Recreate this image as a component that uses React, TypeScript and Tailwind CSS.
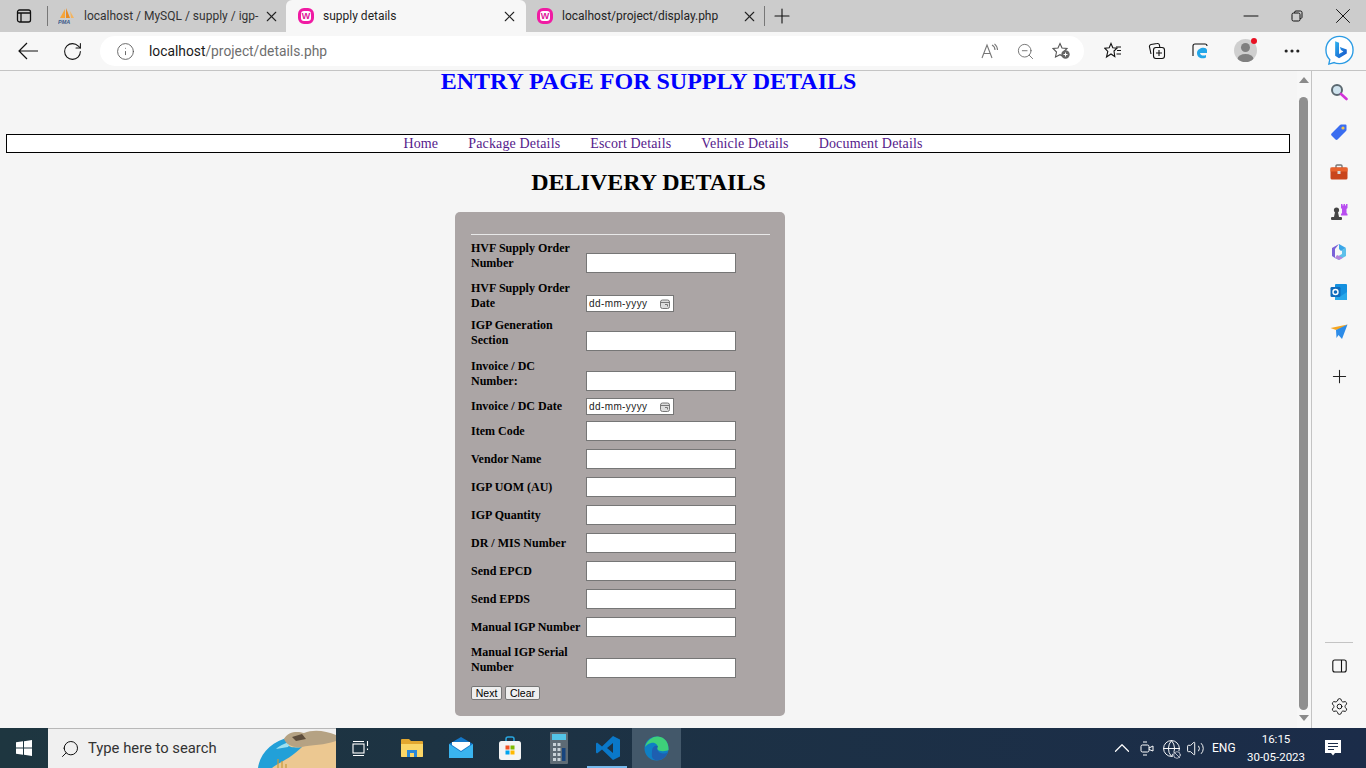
import React from 'react';
import { Ban, ChevronUp, Globe, Info, Minus, MoreHorizontal, Plus, RotateCw, Search, Settings, Volume2, X, ZoomOut } from 'lucide-react';

function WampIcon() {
  return (
    <span className="flex h-[16px] w-[16px] shrink-0 items-center justify-center rounded-[6px] border-[3px] border-[#f01ba3] bg-white font-['Liberation_Sans',sans-serif] text-[9px] font-bold leading-none text-[#e0189a]">
      W
    </span>
  );
}

function PmaIcon() {
  return (
    <svg width="18" height="16" viewBox="0 0 18 16" className="shrink-0">
      <path d="M2 10 L7 1 L7 10Z" fill="#f6a53b" />
      <path d="M8 10 L8 0 L12 10Z" fill="#e98a22" />
      <path d="M12 3 L16 10 L13 10Z" fill="#f4b45e" />
      <text x="0" y="15.5" fontSize="5.5" fontWeight="700" fontStyle="italic" fill="#3b5a8a" fontFamily="Liberation Sans, sans-serif">PMA</text>
    </svg>
  );
}

function Tab({ icon, title, active, tabClass, titleClass }: { icon: React.ReactNode; title: string; active?: boolean; tabClass: string; titleClass: string }) {
  return (
    <div className={`flex h-[32px] shrink-0 items-center ${tabClass} ${active ? 'rounded-t-[6px] bg-[#f7f7f7]' : ''}`}>
      {icon}
      <span className={`whitespace-nowrap text-[12px] text-[#1f1f1f] ${titleClass}`}>{title}</span>
      <span className="flex-1" />
      <X size={17} strokeWidth={1.5} className="text-[#222]" />
    </div>
  );
}

function TabStrip() {
  return (
    <div className="flex h-[32px] items-center bg-[#cccccc]">
      <div className="flex w-[47px] shrink-0 justify-center pl-[1px]">
        <svg width="16" height="16" viewBox="0 0 16 16" fill="none" stroke="#111" strokeWidth="1.3">
          <rect x="1.5" y="2" width="13" height="12" rx="2" />
          <path d="M1.5 5 H14.5 M5 5 V14" />
        </svg>
      </div>
      <div className="h-[20px] w-px bg-[#777]" />
      <Tab icon={<PmaIcon />} title="localhost / MySQL / supply / igp-" tabClass="w-[238px] pl-[10px] pr-[6px]" titleClass="ml-[8px] text-[#333]" />
      <Tab icon={<WampIcon />} title="supply details" active tabClass="w-[240px] pl-[12px] pr-[8px]" titleClass="ml-[9px]" />
      <Tab icon={<WampIcon />} title="localhost/project/display.php" tabClass="w-[238px] pl-[11px] pr-[6px]" titleClass="ml-[9px]" />
      <div className="h-[20px] w-px bg-[#777]" />
      <div className="ml-[9px] flex w-[16px] justify-center">
        <Plus size={24} strokeWidth={1.1} className="shrink-0 text-[#111]" />
      </div>
      <div className="flex-1" />
      <div className="flex w-[46px] justify-center">
        <Minus size={24} strokeWidth={1} className="text-[#111]" />
      </div>
      <div className="flex w-[46px] justify-center">
        <svg width="12" height="12" viewBox="0 0 12 12" fill="none" stroke="#111" strokeWidth="1">
          <rect x="1" y="3" width="8" height="8" rx="1.5" />
          <path d="M3.5 3 V2.5 A1.5 1.5 0 0 1 5 1 H9.5 A1.5 1.5 0 0 1 11 2.5 V7 A1.5 1.5 0 0 1 9 8.5" />
        </svg>
      </div>
      <div className="flex w-[46px] justify-center">
        <X size={26} strokeWidth={0.9} className="text-[#111]" />
      </div>
    </div>
  );
}

function BingIcon() {
  return (
    <svg width="31" height="32" viewBox="0 0 32 32" fill="none">
      <defs>
        <linearGradient id="bing-b" x1="0" y1="0" x2="1" y2="1">
          <stop offset="0" stopColor="#2fb4f0" />
          <stop offset="1" stopColor="#1450c8" />
        </linearGradient>
      </defs>
      <path d="M16 2 C8 2 2 8 2 16 C2 20 3.5 23.5 6 26 L5 30.5 L10.5 29 C12.5 30 14 30 16 30 C24 30 30 24 30 16 C30 8 24 2 16 2Z" fill="#fff" stroke="#2a9be4" strokeWidth="1.4" />
      <path d="M11.5 7 L15.5 8.5 V20 L20 17.5 L17.5 16 L16.3 13 L23.5 15.5 V19.5 L15.5 24.5 L11.5 22Z" fill="url(#bing-b)" />
    </svg>
  );
}

function Toolbar() {
  return (
    <div className="flex h-[38px] items-start bg-[#f7f7f7] pt-[4px]">
      <div className="flex w-[56px] shrink-0 justify-center pt-[6px]">
        <svg width="20" height="18" viewBox="0 0 20 18" fill="none" stroke="#111" strokeWidth="1.2">
          <path d="M1 9 H20 M9 1 L1 9 L9 17" />
        </svg>
      </div>
      <div className="flex w-[32px] shrink-0 justify-center pt-[5px]">
        <RotateCw size={21} strokeWidth={1.2} className="text-[#111]" />
      </div>
      <div className="ml-[12px] flex h-[30px] w-[984px] shrink-0 items-center rounded-full bg-white pl-[16px] pr-[13px]">
        <Info size={19} strokeWidth={1.1} className="text-[#555]" />
        <span className="ml-[14px] text-[13.8px] text-[#1a1a1a]">
          localhost<span className="text-[#6e6e6e]">/project/details.php</span>
        </span>
        <span className="flex-1" />
        <span className="flex items-center gap-[17px]">
          <svg width="18" height="16" viewBox="0 0 18 16" fill="none" stroke="#777" strokeWidth="1.1">
            <path d="M1 15 L6 2 L11 15 M3 10.5 H9" />
            <path d="M11 2 C13 3 14 5 14 7 M13.5 0.8 C15.5 2.5 16.5 4.5 16.5 7" />
          </svg>
          <ZoomOut size={19} strokeWidth={1.1} className="text-[#666]" />
          <svg width="19" height="18" viewBox="0 0 19 18" fill="none">
            <path d="M8 1.5 L10 6 L15 6.5 L11.5 10 L12 15 L8 12.7 L3.5 15 L4.5 10 L1 6.5 L6 6Z" stroke="#555" strokeWidth="1.1" />
            <circle cx="13.5" cy="12.5" r="4.2" fill="#666" />
            <path d="M11.5 12.5 H15.5 M13.5 10.5 V14.5" stroke="#fff" strokeWidth="1" />
          </svg>
        </span>
      </div>
      <div className="ml-[12px] flex w-[33px] justify-center pt-[6px]">
        <svg width="18" height="17" viewBox="0 0 18 17" fill="none" stroke="#111" strokeWidth="1.1">
          <path d="M7 1.5 L8.8 5.8 L13 6.2 L10 9 L10.8 14.5 L7 12 L2.5 15 L3.8 9.5 L0.8 6.2 L5.2 5.8Z" />
          <path d="M12 5 H17 M13 8.5 H17 M12.5 12 H17" />
        </svg>
      </div>
      <div className="ml-[11px] flex w-[34px] justify-center pt-[6px]">
        <svg width="18" height="18" viewBox="0 0 18 18" fill="none" stroke="#111" strokeWidth="1.1">
          <path d="M3 12 L1.5 5 A2 2 0 0 1 3 2.5 L9 1.5 A2 2 0 0 1 11.5 3.5 L11.8 5" />
          <rect x="5.5" y="5.5" width="11" height="11" rx="2.5" />
          <path d="M11 8 V14 M8 11 H14" />
        </svg>
      </div>
      <div className="ml-[9px] flex w-[34px] justify-center pt-[6px]">
        <svg width="18" height="18" viewBox="0 0 18 18" fill="none">
          <path d="M2 14 V4 A2 2 0 0 1 4 2 H14 A2 2 0 0 1 16 4" stroke="#111" strokeWidth="1.1" />
          <path d="M6 11 C6 6 15 4 16 8 L16 11 H9 C9.5 14 13 14 15 13 L15 15.5 C11 17.5 6 16 6 11Z" fill="#22a6e8" />
        </svg>
      </div>
      <div className="ml-[17px] mt-[3px] flex h-[23px] w-[23px] items-center justify-center overflow-hidden rounded-full bg-[#cfcfcf]">
        <svg width="23" height="23" viewBox="0 0 23 23" fill="#808080">
          <circle cx="11.5" cy="8.5" r="4.5" />
          <ellipse cx="11.5" cy="20" rx="8" ry="5" />
        </svg>
      </div>
      <span className="-ml-[6px] mt-[2px] h-[6px] w-[6px] rounded-full bg-[#e81123]" />
      <div className="ml-[23px] flex w-[24px] justify-center pt-[5px]">
        <MoreHorizontal size={20} strokeWidth={1.8} className="text-[#222]" />
      </div>
      <div className="ml-[20px] -mt-[2px]">
        <BingIcon />
      </div>
    </div>
  );
}

type RowData = { label: string; date?: boolean; rowClass: string; labelClass?: string };

const rows: RowData[] = [
  { label: 'HVF Supply Order Number', rowClass: 'mt-[6px] h-[32px]' },
  { label: 'HVF Supply Order Date', date: true, rowClass: 'mt-[8px] h-[31px]' },
  { label: 'IGP Generation Section', rowClass: 'mt-[6px] h-[33px]' },
  { label: 'Invoice / DC Number:', rowClass: 'mt-[8px] h-[32px]' },
  { label: 'Invoice / DC Date', date: true, rowClass: 'mt-[7px] h-[17px]', labelClass: 'mt-px' },
  { label: 'Item Code', rowClass: 'mt-[6px] h-[20px]', labelClass: 'mt-[3px]' },
  { label: 'Vendor Name', rowClass: 'mt-[8px] h-[20px]', labelClass: 'mt-[3px]' },
  { label: 'IGP UOM (AU)', rowClass: 'mt-[8px] h-[20px]', labelClass: 'mt-[3px]' },
  { label: 'IGP Quantity', rowClass: 'mt-[8px] h-[20px]', labelClass: 'mt-[3px]' },
  { label: 'DR / MIS Number', rowClass: 'mt-[8px] h-[20px]', labelClass: 'mt-[3px]' },
  { label: 'Send EPCD', rowClass: 'mt-[8px] h-[20px]', labelClass: 'mt-[3px]' },
  { label: 'Send EPDS', rowClass: 'mt-[8px] h-[20px]', labelClass: 'mt-[3px]' },
  { label: 'Manual IGP Number', rowClass: 'mt-[8px] h-[20px]', labelClass: 'mt-[3px]' },
  { label: 'Manual IGP Serial Number', rowClass: 'mt-[8px] h-[33px]' },
];

function DateField() {
  return (
    <div className="flex h-[17px] w-[88px] items-center border border-[#767676] bg-white pl-[2px] pr-[3px] font-['Liberation_Sans',sans-serif] text-[10px] font-normal text-[#222]">
      <span className="tracking-[0.4px]">dd-mm-yyyy</span>
      <span className="flex-1" />
      <svg width="10" height="10" viewBox="0 0 10 10" fill="#ddd" stroke="#777" strokeWidth="1">
        <rect x="0.5" y="1" width="9" height="8.5" rx="2" />
        <path d="M1 3.5 H9 M5 5.5 H7.5 V7.5" fill="none" />
      </svg>
    </div>
  );
}

function FormRow({ row }: { row: RowData }) {
  return (
    <div className={`flex items-end justify-between pr-[34px] ${row.rowClass}`}>
      <label className={`w-[113px] self-start text-[12px] font-bold leading-[15px] text-black ${row.labelClass ?? ''}`}>{row.label}</label>
      <div className="w-[150px]">
        {row.date ? <DateField /> : <input readOnly className="block h-[20px] w-[150px] border border-[#767676] bg-white" />}
      </div>
    </div>
  );
}

function PageContent() {
  return (
    <div className="h-full min-w-0 flex-1 bg-[#f5f5f5] font-['Liberation_Serif',serif]">
      <h1 className="text-center text-[24px] font-bold leading-[20px] text-[#0000ff]">ENTRY PAGE FOR SUPPLY DETAILS</h1>
      <nav className="ml-[6px] mr-[7px] mt-[43px] flex h-[19px] items-center justify-center border border-black bg-white text-[14px] leading-none tracking-[0.15px] text-[#551a8b]">
        {['Home', 'Package Details', 'Escort Details', 'Vehicle Details', 'Document Details'].map((item) => (
          <a key={item} className="ml-[30px] whitespace-nowrap">
            {item}
          </a>
        ))}
      </nav>
      <h2 className="mt-[15px] text-center text-[24px] font-bold leading-[28px] text-black">DELIVERY DETAILS</h2>
      <div className="ml-[455px] mt-[16px] w-[330px] rounded-[5px] bg-[#aba5a5] pb-[16px] pl-[16px] pr-[15px] pt-[22px]">
        <hr className="border-0 border-t border-[#e8e8e8]" />
        {rows.map((row) => (
          <FormRow key={row.label} row={row} />
        ))}
        <div className="mt-[8px] flex h-[14px] gap-[3px] font-['Liberation_Sans',sans-serif] text-[10.5px] leading-none text-black">
          <button className="flex h-[14px] w-[31px] items-center justify-center rounded-[2px] border border-[#767676] bg-[#efefef]">Next</button>
          <button className="flex h-[14px] w-[35px] items-center justify-center rounded-[2px] border border-[#767676] bg-[#efefef]">Clear</button>
        </div>
      </div>
    </div>
  );
}

function Scrollbar() {
  return (
    <div className="flex h-full w-[15px] shrink-0 flex-col items-center border-r border-[#c4c4c4] bg-[#f7f7f7] pr-[1px]">
      <div className="mt-[6px] h-0 w-0 border-x-[5px] border-b-[6px] border-x-transparent border-b-[#8a8a8a]" />
      <div className="mt-[14px] h-[613px] w-[9px] rounded-full bg-[#8f8f8f]" />
      <div className="mt-[5px] h-0 w-0 border-x-[5px] border-t-[6px] border-x-transparent border-t-[#8a8a8a]" />
    </div>
  );
}

function Sidebar() {
  return (
    <div className="flex h-full w-[54px] shrink-0 flex-col items-center bg-[#f7f7f7] pt-[12px]">
      <div className="flex h-[18px] items-center">
        <svg width="18" height="18" viewBox="0 0 18 18" fill="none">
          <circle cx="7" cy="7" r="5" fill="#cfe3ee" stroke="#5b6870" strokeWidth="2" />
          <path d="M11 11 L16.5 16" stroke="#d233d8" strokeWidth="2.6" strokeLinecap="round" />
        </svg>
      </div>
      <div className="mt-[22px] flex h-[18px] items-center">
        <svg width="18" height="18" viewBox="0 0 18 18">
          <path d="M1.5 10.5 L10 2 A1.5 1.5 0 0 1 11 1.5 H15.5 A1 1 0 0 1 16.5 2.5 V7 A1.5 1.5 0 0 1 16 8 L7.5 16.5 A1.5 1.5 0 0 1 5.5 16.5 L1.5 12.5 A1.5 1.5 0 0 1 1.5 10.5Z" fill="#3a6df0" />
          <circle cx="13" cy="5" r="1.6" fill="#f2c44b" />
        </svg>
      </div>
      <div className="mt-[22px] flex h-[18px] items-center">
        <svg width="18" height="16" viewBox="0 0 18 16">
          <path d="M6 4 V2 A1 1 0 0 1 7 1 H11 A1 1 0 0 1 12 2 V4" fill="none" stroke="#777" strokeWidth="1.4" />
          <rect x="0.5" y="3.5" width="17" height="12" rx="1.5" fill="#c9451c" />
          <rect x="0.5" y="3.5" width="17" height="4" fill="#e8622d" />
          <rect x="7.5" y="7" width="3" height="3" fill="#d8d8d8" />
        </svg>
      </div>
      <div className="mt-[22px] flex h-[18px] items-center">
        <svg width="18" height="18" viewBox="0 0 18 18">
          <circle cx="6.5" cy="7" r="2.6" fill="#444" />
          <path d="M5 9 H8 L9 14 H4Z" fill="#444" />
          <rect x="1" y="14" width="11" height="3" rx="1" fill="#444" />
          <path d="M11 1 H12.5 V2.5 H13.5 V1 H15 V2.5 H16 V1 H17.5 V5 L16.5 6 V10 L17.5 11 V12.5 H11 V11 L12 10 V6 L11 5Z" fill="#b84df0" />
        </svg>
      </div>
      <div className="mt-[22px] flex h-[18px] items-center">
        <svg width="18" height="18" viewBox="0 0 18 18">
          <path d="M9 1 L16 5 L11 8 L9 6 Z" fill="#3aa6e8" />
          <path d="M9 1 L2 5 V13 L5 15 V6Z" fill="#7a62d8" />
          <path d="M16 5 V13 L9 17 L5 15 L12 11 V7Z" fill="#5cc0ea" />
          <path d="M5 15 L9 17 L13 14.7 L7 12Z" fill="#b583dc" />
        </svg>
      </div>
      <div className="mt-[22px] flex h-[18px] items-center">
        <svg width="18" height="18" viewBox="0 0 18 18">
          <rect x="5" y="1" width="12" height="16" rx="1" fill="#1490df" />
          <path d="M5 9 L11 13 L17 9 V17 H5Z" fill="#28a8ea" />
          <rect x="0.5" y="4" width="10" height="10" rx="1.2" fill="#0f6cbd" />
          <circle cx="5.5" cy="9" r="2.5" fill="none" stroke="#fff" strokeWidth="1.4" />
        </svg>
      </div>
      <div className="mt-[22px] flex h-[18px] items-center">
        <svg width="18" height="16" viewBox="0 0 18 16">
          <path d="M0.5 4 L17.5 0.5 L11 4.5 L6 6Z" fill="#f5a623" />
          <path d="M6 6 L17.5 0.5 L12 15 L8.5 11 L6.5 14Z" fill="#2d8ce8" />
        </svg>
      </div>
      <div className="mt-[26px] flex h-[18px] items-center">
        <Plus size={21} strokeWidth={1.2} className="shrink-0 text-[#222]" />
      </div>
      <div className="flex-1" />
      <div className="h-px w-[28px] bg-[#c4c4c4]" />
      <div className="mt-[15px] flex h-[16px] items-center">
        <svg width="15" height="14" viewBox="0 0 15 14" fill="none" stroke="#111" strokeWidth="1.1">
          <rect x="0.8" y="1" width="13.4" height="12" rx="2" />
          <path d="M9.5 1 V13" />
        </svg>
      </div>
      <div className="mb-[14px] mt-[24px] flex h-[16px] items-center">
        <Settings size={19} strokeWidth={1.2} className="shrink-0 text-[#111]" />
      </div>
    </div>
  );
}

function TaskIcon({ children, cellClass }: { children: React.ReactNode; cellClass?: string }) {
  return <div className={`relative flex h-[40px] w-[49px] shrink-0 items-center justify-center ${cellClass ?? ''}`}>{children}</div>;
}

function Taskbar() {
  return (
    <div className="flex h-[40px] items-center bg-gradient-to-r from-[#1e3640] to-[#1b2c49] font-['Roboto',sans-serif] text-white">
      <div className="flex w-[48px] shrink-0 justify-center">
        <svg width="16" height="16" viewBox="0 0 16 16" fill="#fff">
          <path d="M0 2.3 L7 1.3 V7.5 H0Z M8 1.2 L16 0 V7.5 H8Z M0 8.5 H7 V14.7 L0 13.7Z M8 8.5 H16 V16 L8 14.8Z" />
        </svg>
      </div>
      <div className="flex h-[40px] w-[288px] shrink-0 items-center overflow-hidden border-t border-[#b8b8b8] bg-[#f0f0f0] pl-[12px]">
        <Search size={20} strokeWidth={1.2} className="-scale-x-100 text-[#111]" />
        <span className="ml-[8px] whitespace-nowrap text-[14.8px] text-[#333]">Type here to search</span>
        <span className="flex-1" />
        <svg width="78" height="39" viewBox="0 0 78 39" className="shrink-0">
          <ellipse cx="58" cy="42" rx="58" ry="36" fill="#ecc891" />
          <path d="M0 39 C2 24 14 12 32 8 C26 16 30 20 44 18 C32 30 20 34 14 39Z" fill="#22a0d8" />
          <path d="M18 20 C22 16 30 13 34 12 L30 18Z" fill="#9fe0ef" />
          <path d="M26 10 C30 2 40 2 46 4 C56 0 68 2 78 6 V12 C68 16 52 16 44 18 C36 19 28 16 26 10Z" fill="#b5a283" />
          <path d="M34 8 L44 5 L48 10 L38 12Z" fill="#5d4d3c" />
          <path d="M20 39 V30 M24 39 V32 M28 39 V35" stroke="#c79a3c" strokeWidth="1.2" />
        </svg>
      </div>
      <TaskIcon>
        <svg width="17" height="17" viewBox="0 0 17 17" fill="none" stroke="#fff" strokeWidth="1.1">
          <rect x="1" y="4" width="11" height="9" />
          <path d="M1 1.5 H12 M1 15.5 H12 M15.5 1 V6 M15.5 8.5 V10" />
        </svg>
      </TaskIcon>
      <div className="w-[2px]" />
      <TaskIcon>
        <svg width="22" height="20" viewBox="0 0 22 20">
          <path d="M0 2 A1 1 0 0 1 1 1 H8 L10 3 H21 A1 1 0 0 1 22 4 V18 A1 1 0 0 1 21 19 H1 A1 1 0 0 1 0 18Z" fill="#e3a72f" />
          <path d="M0 6 H22 V18 A1 1 0 0 1 21 19 H1 A1 1 0 0 1 0 18Z" fill="#fbd667" />
          <rect x="6" y="12" width="10" height="7" fill="#2b88d8" />
          <rect x="9" y="15" width="4" height="4" fill="#fbd667" />
        </svg>
      </TaskIcon>
      <TaskIcon>
        <svg width="24" height="22" viewBox="0 0 24 22">
          <path d="M0 7 L12 0 L24 7 V21 H0Z" fill="#1477c8" />
          <path d="M0 7 L12 15 L24 7 V21 H0Z" fill="#3ab4ef" />
          <path d="M3 5 H21 V8 L12 14 L3 8Z" fill="#fff" />
        </svg>
      </TaskIcon>
      <TaskIcon>
        <svg width="22" height="24" viewBox="0 0 22 24">
          <path d="M7 6 V3 A2 2 0 0 1 9 1 H13 A2 2 0 0 1 15 3 V6" fill="none" stroke="#29a6df" strokeWidth="1.5" />
          <rect x="0" y="5" width="22" height="19" rx="2.5" fill="#f4f4f4" />
          <rect x="6.5" y="9.5" width="4" height="4" fill="#f25022" />
          <rect x="11.5" y="9.5" width="4" height="4" fill="#7fba00" />
          <rect x="6.5" y="14.5" width="4" height="4" fill="#00a4ef" />
          <rect x="11.5" y="14.5" width="4" height="4" fill="#ffb900" />
        </svg>
      </TaskIcon>
      <TaskIcon>
        <svg width="18" height="32" viewBox="0 0 18 32">
          <rect width="18" height="32" rx="1" fill="#5d6b75" />
          <rect x="2" y="2" width="14" height="6" fill="#53c4e8" />
          <path d="M3 11 H6 V14 H3Z M7.5 11 H10.5 V14 H7.5Z M3 16 H6 V19 H3Z M7.5 16 H10.5 V19 H7.5Z M3 21 H6 V24 H3Z M7.5 21 H10.5 V24 H7.5Z M3 26 H6 V29 H3Z M7.5 26 H10.5 V29 H7.5Z" fill="#c8d2d8" />
          <rect x="12" y="16" width="3.5" height="13" fill="#17457e" />
        </svg>
      </TaskIcon>
      <TaskIcon>
        <svg width="24" height="24" viewBox="0 0 24 24">
          <path d="M17 0 L24 3.5 V20.5 L17 24 L6 13.5 L1 17.5 L0 16.5 V7.5 L1 6.5 L6 10.5Z M17 7 L11 12 L17 17Z" fill="#0a78c9" fillRule="evenodd" />
        </svg>
        <span className="absolute bottom-0 left-[4px] right-[5px] h-[2px] bg-[#76b9ed]" />
      </TaskIcon>
      <TaskIcon cellClass="bg-[#43586a]">
        <svg width="25" height="25" viewBox="0 0 25 25">
          <circle cx="12.5" cy="12.5" r="12" fill="#0f7fc4" />
          <path d="M1 11 C3 3 10 0 14 0.5 C21 1 25 7 24.5 14 C22 15.5 15 16 13 13 C15 9 11 6 7 7 C4 8 2 9.5 1 11Z" fill="#3ed07a" />
          <path d="M8 15 C8 11 11 9 14 10 C12 13 14 17 19 17.5 C21 17.5 23 17 24 16 C22 22 15 26 10 23.5 C7 22 8 18 8 15Z" fill="#1e5fb0" />
        </svg>
      </TaskIcon>
      <div className="flex-1" />
      <div className="flex w-[26px] justify-center">
        <ChevronUp size={26} strokeWidth={1.1} className="shrink-0" />
      </div>
      <div className="flex w-[24px] justify-center">
        <svg width="14" height="17" viewBox="0 0 14 17" fill="none" stroke="#fff" strokeWidth="1">
          <rect x="1" y="5" width="8" height="7" rx="1.5" />
          <path d="M9 8 L13 6 V11 L9 9.5 M3 2 H7 M3 15 H7" />
        </svg>
      </div>
      <div className="relative flex w-[24px] justify-center">
        <Globe size={19} strokeWidth={1.2} className="shrink-0" />
        <Ban size={8} strokeWidth={2} className="absolute bottom-[-1px] right-[2px] rounded-full bg-[#1b2c49]" />
      </div>
      <div className="flex w-[24px] justify-center">
        <Volume2 size={19} strokeWidth={1.2} className="shrink-0" />
      </div>
      <span className="ml-[5px] w-[24px] text-[12px]">ENG</span>
      <div className="ml-[8px] w-[64px] text-center text-[11.5px] leading-[18px]">
        <div>16:15</div>
        <div>30-05-2023</div>
      </div>
      <div className="ml-[17px] mr-[25px] flex w-[16px] justify-center">
        <svg width="16" height="17" viewBox="0 0 16 17">
          <path d="M0 0 H16 V13 H10 L8 15.5 L6 13 H0Z" fill="#fff" />
          <path d="M3 3.5 H13 M3 6.5 H13 M3 9.5 H9" stroke="#1b2c49" strokeWidth="1" />
        </svg>
      </div>
    </div>
  );
}

export default function App() {
  return (
    <div className="flex h-[768px] w-[1366px] flex-col overflow-hidden bg-[#f7f7f7] font-['Roboto',sans-serif]">
      <TabStrip />
      <Toolbar />
      <div className="flex min-h-0 flex-1 border-t border-[#c4c4c4]">
        <PageContent />
        <Scrollbar />
        <Sidebar />
      </div>
      <Taskbar />
    </div>
  );
}
